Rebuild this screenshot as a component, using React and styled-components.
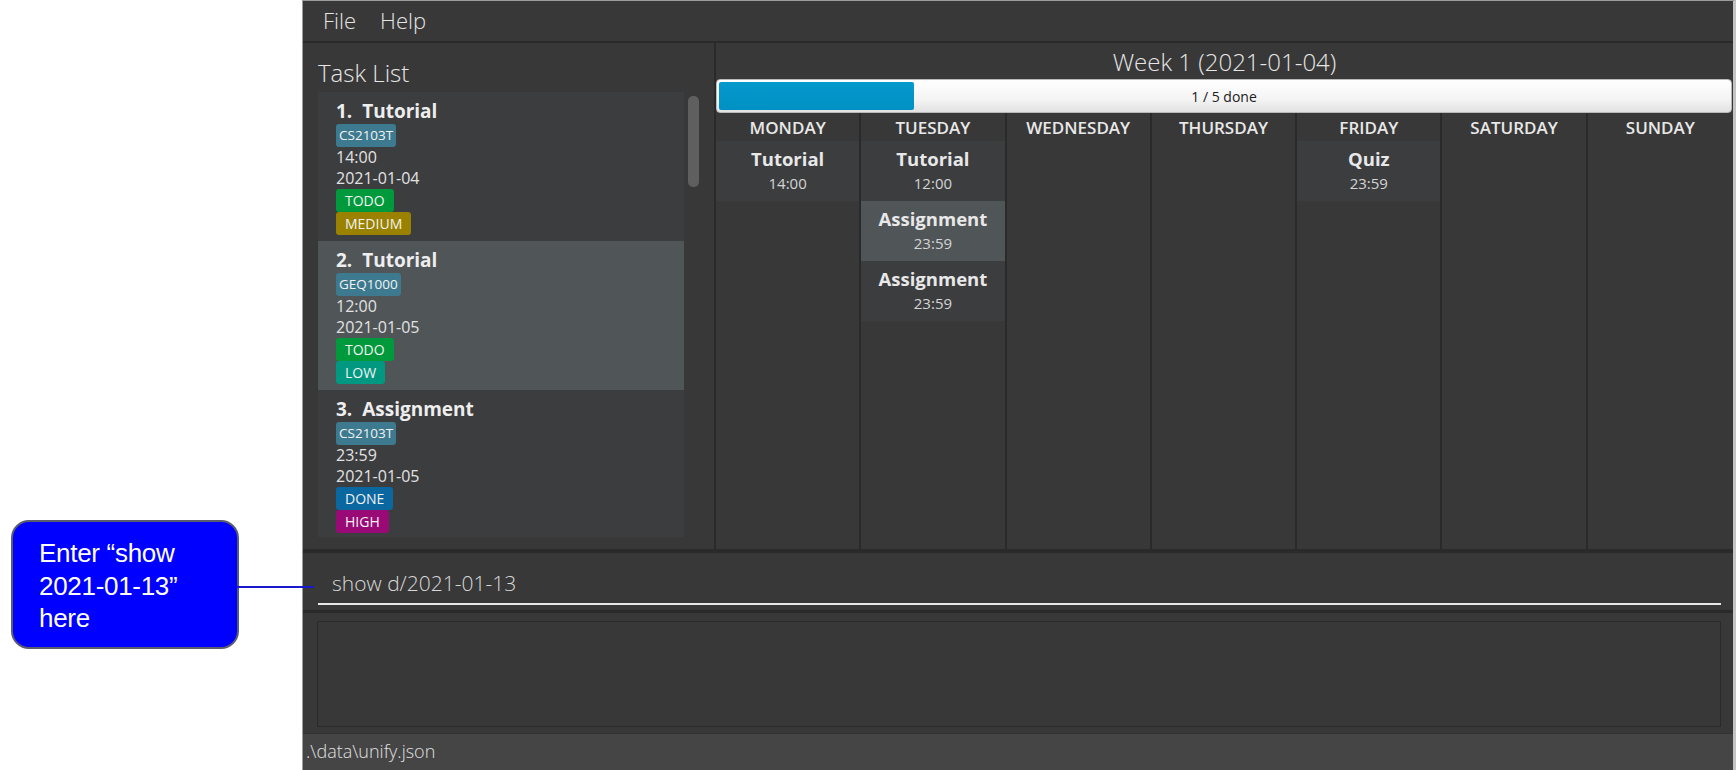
import React from "react";
import styled, { createGlobalStyle } from "styled-components";

const GlobalStyle = createGlobalStyle`
  html, body {
    margin: 0;
    padding: 0;
    background: #ffffff;
  }
  body {
    font-family: "Open Sans", "DejaVu Sans", sans-serif;
  }
  * {
    box-sizing: border-box;
  }
`;

const Page = styled.div`
  display: flex;
  width: 1736px;
  height: 770px;
  overflow: hidden;
`;

const Gutter = styled.div`
  width: 302px;
  flex-shrink: 0;
  padding: 520px 0 0 11px;
`;

const Callout = styled.div`
  position: relative;
  width: 228px;
  height: 129px;
  padding: 15px 0 0 26px;
  background: #0000ff;
  border: 2px solid #5b5b70;
  border-radius: 18px;
  color: #ffffff;
  font-family: "Liberation Sans", Arial, sans-serif;
  font-size: 26px;
  line-height: 32.5px;
  letter-spacing: -0.3px;
`;

const Connector = styled.div`
  position: absolute;
  left: 100%;
  top: 64px;
  width: 77px;
  height: 2px;
  background: #1a1acc;
  z-index: 2;
`;

const Window = styled.div`
  flex: 1;
  display: flex;
  flex-direction: column;
  background: #383838;
  border-left: 1px solid #9c9c9c;
  border-top: 1px solid #9c9c9c;
  border-right: 3px solid #c4c4c4;
  color: #e6e6e6;
`;

const MenuBar = styled.div`
  display: flex;
  align-items: center;
  gap: 24px;
  height: 42px;
  padding: 0 0 2px 20px;
  border-bottom: 2px solid #2a2a2a;
  font-size: 22px;
  font-weight: 300;
  color: #e4e4e4;
`;

const Main = styled.div`
  display: flex;
  height: 510px;
  border-bottom: 4px solid #2a2a2a;
`;

const TaskPanel = styled.div`
  width: 413px;
  flex-shrink: 0;
  display: flex;
  flex-direction: column;
  padding: 0 0 12px 15px;
  border-right: 2px solid #2a2a2a;
`;

const PanelTitle = styled.div`
  height: 49px;
  padding-top: 13px;
  font-size: 24px;
  font-weight: 300;
  line-height: 34px;
  color: #e6e6e6;
`;

const ListRow = styled.div`
  flex: 1;
  display: flex;
  min-height: 0;
`;

const List = styled.div`
  width: 366px;
  background: #3c3d3f;
  overflow: hidden;
`;

const ScrollTrack = styled.div`
  width: 11px;
  margin-left: 4px;
  padding-top: 4px;
`;

const ScrollThumb = styled.div`
  height: 91px;
  border-radius: 5px;
  background: #5f5f5f;
`;

const Card = styled.div`
  display: flex;
  flex-direction: column;
  align-items: flex-start;
  padding: 7px 0 6px 18px;
  background: ${(p) => (p.selected ? "#505557" : "#3c3d3f")};
`;

const CardTitle = styled.div`
  font-size: 19px;
  font-weight: 700;
  line-height: 24px;
  white-space: pre;
  color: #eeeeee;
  margin-bottom: 1px;
`;

const Line = styled.div`
  font-size: 16px;
  line-height: 21px;
  color: #e2e2e2;
`;

const Tag = styled.span`
  display: inline-block;
  height: 23px;
  padding: 0 ${(p) => (p.wide ? "9px" : "3px")};
  border-radius: 3px;
  background: ${(p) => p.color};
  color: #f2f2f2;
  font-size: ${(p) => (p.wide ? "14px" : "13.5px")};
  line-height: 23px;
`;

const Calendar = styled.div`
  flex: 1;
  display: flex;
  flex-direction: column;
  min-width: 0;
`;

const WeekTitle = styled.div`
  height: 36px;
  text-align: center;
  font-size: 24px;
  font-weight: 300;
  line-height: 38px;
  color: #e6e6e6;
`;

const Progress = styled.div`
  display: grid;
  height: 34px;
  margin-right: 1px;
  padding: 2px;
  border: 1px solid #b9b9b9;
  border-radius: 4px;
  background: linear-gradient(#ffffff, #f4f4f4 60%, #e2e2e2);
`;

const ProgressFill = styled.div`
  grid-area: 1 / 1;
  border-radius: 2px;
  background: linear-gradient(#0599cc, #0090c4);
`;

const ProgressLabel = styled.div`
  grid-area: 1 / 1;
  align-self: center;
  text-align: center;
  font-size: 14px;
  color: #202020;
`;

const Days = styled.div`
  flex: 1;
  display: grid;
  grid-template-columns: repeat(7, 1fr);
`;

const DayColumn = styled.div`
  display: flex;
  flex-direction: column;
  border-right: ${(p) => (p.last ? "none" : "2px solid #2a2a2a")};
`;

const DayHeader = styled.div`
  height: 28px;
  text-align: center;
  font-size: 17px;
  font-weight: 600;
  line-height: 30px;
  color: #e8e8e8;
`;

const Event = styled.div`
  height: 60px;
  padding-top: 5px;
  text-align: center;
  background: ${(p) => (p.selected ? "#505557" : "#3c3d3f")};
`;

const EventTitle = styled.div`
  font-size: 18.5px;
  font-weight: 700;
  line-height: 26px;
  color: #e8e8e8;
`;

const EventTime = styled.div`
  font-size: 15px;
  line-height: 22px;
  color: #d4d4d4;
`;

const CommandBox = styled.div`
  height: 60px;
  padding: 0 12px 5px 15px;
  display: flex;
  align-items: flex-end;
  border-bottom: 3px solid #2a2a2a;
`;

const CommandInput = styled.div`
  width: 100%;
  padding: 0 0 6px 14px;
  border-bottom: 2px solid #e8e8e8;
  font-size: 21px;
  font-weight: 300;
  line-height: 28px;
  color: #d8d8d8;
`;

const ResultArea = styled.div`
  height: 120px;
  padding: 8px 12px 6px 14px;
`;

const ResultBox = styled.div`
  height: 100%;
  border: 1px solid #2a2a2a;
  background: #383838;
`;

const StatusBar = styled.div`
  flex: 1;
  display: flex;
  align-items: center;
  padding: 0 0 2px 3px;
  background: #454545;
  border-top: 1px solid #333333;
  font-size: 18px;
  font-weight: 300;
  color: #e0e0e0;
`;

const tasks = [
  { title: "Tutorial", module: "CS2103T", time: "14:00", date: "2021-01-04", status: "TODO", priority: "MEDIUM" },
  { title: "Tutorial", module: "GEQ1000", time: "12:00", date: "2021-01-05", status: "TODO", priority: "LOW", selected: true },
  { title: "Assignment", module: "CS2103T", time: "23:59", date: "2021-01-05", status: "DONE", priority: "HIGH" },
];

const tagColors = {
  TODO: "#009a3c",
  DONE: "#0a67a0",
  LOW: "#009880",
  MEDIUM: "#9a8200",
  HIGH: "#990a76",
};

const week = [
  { day: "MONDAY", events: [{ title: "Tutorial", time: "14:00" }] },
  {
    day: "TUESDAY",
    events: [
      { title: "Tutorial", time: "12:00" },
      { title: "Assignment", time: "23:59", selected: true },
      { title: "Assignment", time: "23:59" },
    ],
  },
  { day: "WEDNESDAY", events: [] },
  { day: "THURSDAY", events: [] },
  { day: "FRIDAY", events: [{ title: "Quiz", time: "23:59" }] },
  { day: "SATURDAY", events: [] },
  { day: "SUNDAY", events: [] },
];

const done = 1;
const total = 5;

const App = () => {
  return (
    <>
      <GlobalStyle />
      <Page>
        <Gutter>
          <Callout>
            Enter “show
            <br />
            2021-01-13”
            <br />
            here
            <Connector />
          </Callout>
        </Gutter>
        <Window>
          <MenuBar>
            <span>File</span>
            <span>Help</span>
          </MenuBar>
          <Main>
            <TaskPanel>
              <PanelTitle>Task List</PanelTitle>
              <ListRow>
                <List>
                  {tasks.map((t, i) => (
                    <Card key={i} selected={t.selected}>
                      <CardTitle>{`${i + 1}.  ${t.title}`}</CardTitle>
                      <Tag color="#3d7a90">{t.module}</Tag>
                      <Line>{t.time}</Line>
                      <Line>{t.date}</Line>
                      <Tag wide color={tagColors[t.status]}>{t.status}</Tag>
                      <Tag wide color={tagColors[t.priority]}>{t.priority}</Tag>
                    </Card>
                  ))}
                </List>
                <ScrollTrack>
                  <ScrollThumb />
                </ScrollTrack>
              </ListRow>
            </TaskPanel>
            <Calendar>
              <WeekTitle>Week 1 (2021-01-04)</WeekTitle>
              <Progress>
                <ProgressFill style={{ width: `${(done / total) * 100 - 0.7}%` }} />
                <ProgressLabel>
                  {done} / {total} done
                </ProgressLabel>
              </Progress>
              <Days>
                {week.map((d, i) => (
                  <DayColumn key={d.day} last={i === week.length - 1}>
                    <DayHeader>{d.day}</DayHeader>
                    {d.events.map((e, j) => (
                      <Event key={j} selected={e.selected}>
                        <EventTitle>{e.title}</EventTitle>
                        <EventTime>{e.time}</EventTime>
                      </Event>
                    ))}
                  </DayColumn>
                ))}
              </Days>
            </Calendar>
          </Main>
          <CommandBox>
            <CommandInput>show d/2021-01-13</CommandInput>
          </CommandBox>
          <ResultArea>
            <ResultBox />
          </ResultArea>
          <StatusBar>.\data\unify.json</StatusBar>
        </Window>
      </Page>
    </>
  );
};

export default App;
